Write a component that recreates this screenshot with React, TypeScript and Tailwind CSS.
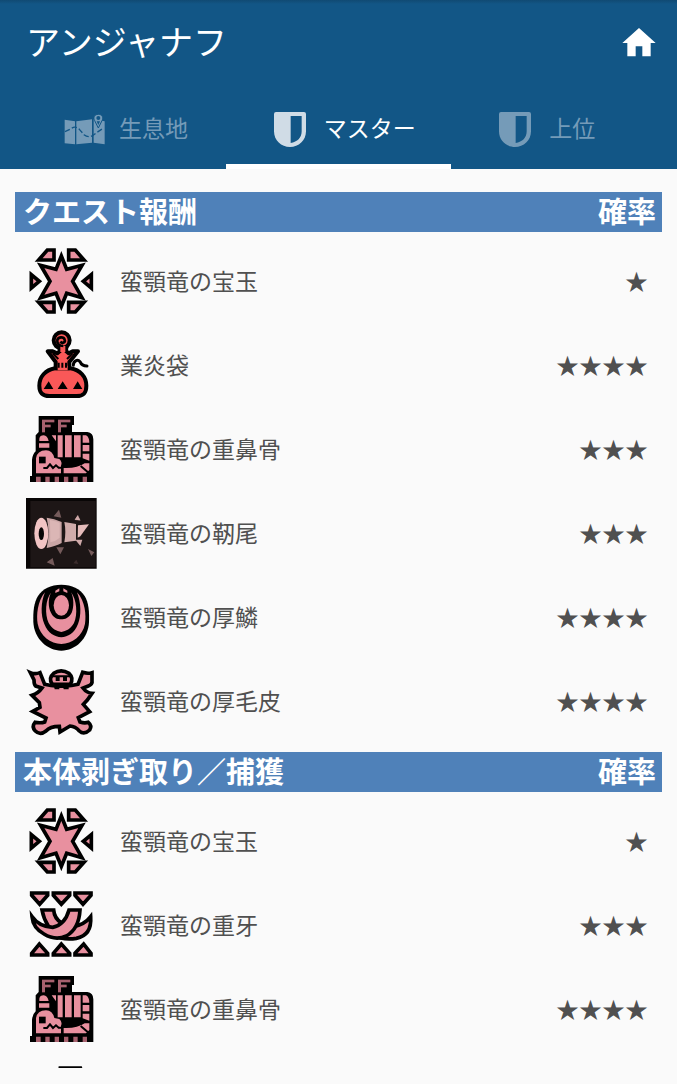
import { ReactNode, useState } from 'react';
import { MdHome } from 'react-icons/md';

type MaterialKind = 'gem' | 'sac' | 'bone' | 'tail' | 'scale' | 'hide' | 'fang' | 'claw';

interface Reward {
  name?: string;
  kind: MaterialKind;
  rate: number;
}

interface RewardGroup {
  title: string;
  rewards: Reward[];
}

const groups: RewardGroup[] = [
  {
    title: 'クエスト報酬',
    rewards: [
      { name: '蛮顎竜の宝玉', kind: 'gem', rate: 1 },
      { name: '業炎袋', kind: 'sac', rate: 4 },
      { name: '蛮顎竜の重鼻骨', kind: 'bone', rate: 3 },
      { name: '蛮顎竜の靭尾', kind: 'tail', rate: 3 },
      { name: '蛮顎竜の厚鱗', kind: 'scale', rate: 4 },
      { name: '蛮顎竜の厚毛皮', kind: 'hide', rate: 4 },
    ],
  },
  {
    title: '本体剥ぎ取り／捕獲',
    rewards: [
      { name: '蛮顎竜の宝玉', kind: 'gem', rate: 1 },
      { name: '蛮顎竜の重牙', kind: 'fang', rate: 3 },
      { name: '蛮顎竜の重鼻骨', kind: 'bone', rate: 4 },
      { kind: 'claw', rate: 0 },
    ],
  },
];

const drawings: Record<MaterialKind, ReactNode> = {
  gem: (
    <g fill="#e8909f" stroke="#000" strokeWidth="11">
      <path d="M56 60 82 30H102V60Z" />
      <path d="M192 60 166 30H146V60Z" />
      <path d="M56 187 82 216H102V187Z" />
      <path d="M192 187 166 216H146V187Z" />
      <path d="M34 104V144L58 124Z" />
      <path d="M214 104V144L190 124Z" />
      <path d="M124 48 140 88 186 76 158 124 186 173 140 160 124 199 108 160 62 173 90 124 62 76 108 88Z" />
    </g>
  ),
  sac: (
    <>
      <g stroke="#000" strokeWidth="12" strokeLinejoin="round" strokeLinecap="round">
        <path
          d="M105 133C76 138 58 158 58 185C58 206 66 216 88 216H170C192 216 199 206 199 185C199 158 181 138 151 133Z"
          fill="#fa5858"
        />
        <path d="M160 124C160 112 172 104 180 113C184 123 190 126 201 126" fill="none" strokeWidth="9" />
        <circle cx="125" cy="49" r="24" fill="#fa5858" />
        <path d="M83 82H98L112 88 120 81 119 71H139L138 81 146 88 158 82H174L148 114V133H107V114Z" fill="#fa5858" />
      </g>
      <path d="M113 139H143V125H113ZM121 66H136V84H121Z" fill="#fa5858" />
      <path
        d="M121 53C127 60 137 55 134 47C131 37 115 38 112 48C110 59 118 66 130 66"
        fill="none"
        stroke="#000"
        strokeWidth="8"
      />
      <path d="M116 116V131M127 116V131M138 116V131M115 105 98 88M141 105 158 88" stroke="#000" strokeWidth="6" />
      <path d="M71 195 86 172 100 195ZM113 195 128 172 143 195ZM159 195 173 172 187 195Z" fill="#000" />
    </>
  ),
  bone: (
    <>
      <path
        d="M56 24H162V51H156V72H202Q220 74 220 94V222H30V204H36V155Q38 138 47 130V82L56 72Z"
        fill="#000"
      />
      <g fill="#a7616e">
        <rect x="66" y="35" width="9" height="38" />
        <rect x="75" y="35" width="28" height="8" />
        <rect x="75" y="50" width="17" height="8" />
        <rect x="114" y="35" width="9" height="38" />
        <rect x="123" y="35" width="28" height="8" />
        <rect x="123" y="50" width="17" height="8" />
        <path d="M48 206H62V222H48ZM76 206H89V222H76ZM104 206H117V222H104ZM132 206H145V222H132ZM160 206H173V222H160ZM188 206H201V222H188Z" />
      </g>
      <g fill="#e8909f">
        <path d="M58 99V92Q60 82 71 82Q82 83 86 99ZM57 106H88V119H57ZM95 82H108V100Z" />
        <path d="M113 82H128V148H113ZM135 82H155V148H135ZM162 82H182V148H162ZM188 82H198Q208 87 208 104H188ZM188 111H208V130H188ZM188 137H208V158L188 151Z" />
        <path d="M48 196V151Q51 128 78 127Q98 128 103 150L118 153Q128 162 123 173V196ZM131 180Q171 182 194 166L208 166V186L198 196H131Z" />
      </g>
      <path d="M57 146H77V166H57Z" fill="#000" />
      <path
        d="M70 180H81L90 169 99 180 108 172 116 179H126M182 174 204 193"
        fill="none"
        stroke="#000"
        strokeWidth="6"
      />
    </>
  ),
  tail: (
    <>
      <path d="M18 18H230V230H18Z" fill="#080505" />
      <path d="M31 27H227V226H31Z" fill="#1d1616" />
      <path
        d="M101 73 117 53 124 77ZM164 84 174 68 182 86ZM109 166 132 166 121 187ZM204 171 223 181 214 192ZM80 211 98 198 104 221Z"
        fill="#755b5b"
      />
      <path d="M160 214 169 203 175 216Z" fill="#3b2c2c" />
      <path d="M164 83 173 70 181 85ZM166 143H187L181 162Z" fill="#cfa9a9" />
      <path d="M80 77Q103 79 125 90V153Q108 162 80 168Q91 122 80 77Z" fill="#c9a5a5" />
      <path d="M90 84Q107 87 119 92V137Q106 149 91 151Z" fill="#dbb6b5" />
      <path d="M133 90 168 96V146L133 151Q139 119 133 90Z" fill="#d0acab" />
      <path d="M174 100 207 97 181 133 173 137Z" fill="#e5bcbb" />
      <ellipse cx="64" cy="124" rx="21" ry="47" fill="#f2c4c4" />
      <ellipse cx="64" cy="125" rx="8" ry="19" fill="#090606" />
    </>
  ),
  scale: (
    <>
      <path
        d="M124 26C156 26 180 38 194 60C206 80 208 104 207 138C205 188 166 224 124 224C82 224 42 188 40 138C39 104 42 80 54 60C68 38 92 26 124 26Z"
        fill="#000"
      />
      <g fill="#e8909f">
        <path d="M75 49C52 76 49 118 53 143C60 180 92 203 124 204C156 203 188 180 195 143C199 118 196 76 171 49C184 82 184 120 174 144C163 172 144 182 124 184C104 182 84 172 73 144C62 118 62 80 75 49Z" />
        <path d="M94 49C76 70 74 116 86 141C96 159 110 165 124 168C138 165 152 159 162 141C174 116 170 70 153 49C162 66 162 94 155 110C147 125 135 130 124 130C112 130 100 125 93 110C84 94 84 66 94 49Z" />
        <path d="M106 44 118 37V46L106 51ZM142 44 130 37V46L142 51Z" />
        <ellipse cx="124" cy="88" rx="23" ry="31" />
      </g>
    </>
  ),
  hide: (
    <>
      <path
        d="M31 38Q45 44 60 38L74 73Q94 79 123 78Q154 79 174 73L188 37Q203 42 216 38V61Q218 73 205 78L189 84Q200 99 216 100L202 120 190 133 209 155 175 173 180 186Q194 191 205 187Q217 197 209 210Q192 226 178 213Q166 199 150 198L120 216 118 199Q90 199 78 213Q60 227 46 213Q34 200 45 187Q64 190 74 186L78 174 38 154 60 142 58 128 36 106Q55 100 66 84L47 78Q42 74 42 60Z"
        fill="#e8909f"
        stroke="#000"
        strokeWidth="11"
        strokeMiterlimit="3"
      />
      <path
        d="M97 73Q84 54 101 40Q123 25 147 40Q162 54 151 73Z"
        fill="#e8909f"
        stroke="#000"
        strokeWidth="11"
      />
      <path
        d="M96 49H151M110 52V60H116V52M132 52V60H138V52M96 72H154"
        fill="none"
        stroke="#000"
        strokeWidth="6"
      />
      <path d="M101 74H118V88H104ZM128 74H146V88H131Z" fill="#000" />
    </>
  ),
  fang: (
    <g fill="#e8909f" stroke="#000" strokeWidth="11">
      <path d="M35 27H83V34L59 61 35 34ZM100 27H149V34L124 61 100 34ZM165 27H213V34L189 61 165 34Z" />
      <path d="M35 213V208L58 180 83 208V213ZM100 213V208L124 180 149 208V213ZM165 213V208L191 180 213 208V213Z" />
      <path d="M66 78H101Q103 104 125 117L160 128Q194 122 212 98Q216 154 169 163Q145 167 122 162Q76 132 66 78Z" />
      <path d="M36 98Q57 128 98 130Q135 122 147 78H180Q177 134 139 156Q106 171 72 150Q39 132 36 98Z" />
    </g>
  ),
  claw: (
    <path
      d="M120 47H182L194 89 170 156 117 211 64 194 88 166 113 105Z"
      fill="#e8909f"
      stroke="#000"
      strokeWidth="9"
    />
  ),
};

function MaterialIcon({ kind }: { kind: MaterialKind }) {
  return (
    <svg viewBox="0 0 252 252" className="size-[84px] shrink-0" aria-hidden="true">
      {drawings[kind]}
    </svg>
  );
}

function MapIcon() {
  return (
    <svg viewBox="0 0 123 96" className="w-[41px] h-8 shrink-0" aria-hidden="true">
      <path d="M2 20 33 25V94L2 91ZM37 25 84 19V89L37 94ZM89 19 122 25V94L89 89Z" fill="#759bb8" />
      <path
        d="M3 56 20 48Q33 36 46 49L60 65Q77 79 96 60L116 47"
        fill="none"
        stroke="#125686"
        strokeWidth="4"
        strokeDasharray="16 7"
      />
      <path
        d="M103 4C91 4 87 14 92 23L103 45 114 23C119 14 115 4 103 4Z"
        fill="#759bb8"
        stroke="#125686"
        strokeWidth="3"
      />
      <path d="M98 25 103 36 108 25Z" fill="#125686" />
      <circle cx="103" cy="15" r="6" fill="#125686" />
    </svg>
  );
}

function ShieldIcon({ active }: { active: boolean }) {
  return (
    <svg viewBox="0 0 96 105" className={`w-8 h-[35px] shrink-0 ${active ? 'text-[#d0dce6]' : 'text-[#759bb8]'}`} aria-hidden="true">
      <path
        fill="currentColor"
        fillRule="evenodd"
        d="M6 0H90Q96 0 96 6V58C96 86 74 105 48 105C22 105 0 86 0 58V6Q0 0 6 0ZM50 12V93C70 90 83 78 83 58V12Z"
      />
    </svg>
  );
}

const tabs = ['生息地', 'マスター', '上位'];

export default function App() {
  const [activeTab, setActiveTab] = useState(1);

  return (
    <div className="flex h-screen flex-col bg-[#fafafa] font-['Noto_Sans_CJK_JP',sans-serif]">
      <header className="shrink-0 bg-[#125686] text-white">
        <div className="h-1 bg-linear-to-b from-[#104a73] to-[#125686]" />
        <div className="flex h-[78px] items-center justify-between pl-[26px] pr-[18px]">
          <h1 className="pb-1 text-[34px] leading-10">アンジャナフ</h1>
          <button type="button" aria-label="ホーム">
            <MdHome className="size-10" />
          </button>
        </div>
        <nav className="grid h-[87px] grid-cols-3">
          {tabs.map((tab, index) => (
            <button
              key={tab}
              type="button"
              onClick={() => setActiveTab(index)}
              className={`flex items-center border-b-[5px] pt-3 text-[23px] leading-8 whitespace-nowrap ${
                index === 0 ? 'gap-[14px] pl-16' : 'gap-[18px] pl-12'
              } ${activeTab === index ? 'border-white' : 'border-transparent text-[#759bb8]'}`}
            >
              {index === 0 ? <MapIcon /> : <ShieldIcon active={activeTab === index} />}
              <span className="pb-1">{tab}</span>
            </button>
          ))}
        </nav>
      </header>

      <main className="mx-[15px] mb-4 min-h-0 flex-1 overflow-y-auto pt-[23px] [scrollbar-width:none]">
        {groups.map((group) => (
          <section key={group.title}>
            <div className="flex h-10 items-center justify-between bg-[#4f81b9] pb-1 pl-2 pr-[6px] text-[29px] leading-9 font-bold text-white">
              <h2>{group.title}</h2>
              <span>確率</span>
            </div>
            <ul className="py-2">
              {group.rewards.map((reward) => (
                <li key={reward.kind} className="flex h-[84px] items-center pl-[5px] pr-[14px] text-[23px] leading-8 text-[#505050]">
                  <MaterialIcon kind={reward.kind} />
                  {reward.name && (
                    <>
                      <span className="ml-4 flex-1 pb-1">{reward.name}</span>
                      <span className="pb-1">{'★'.repeat(reward.rate)}</span>
                    </>
                  )}
                </li>
              ))}
            </ul>
          </section>
        ))}
      </main>
    </div>
  );
}
